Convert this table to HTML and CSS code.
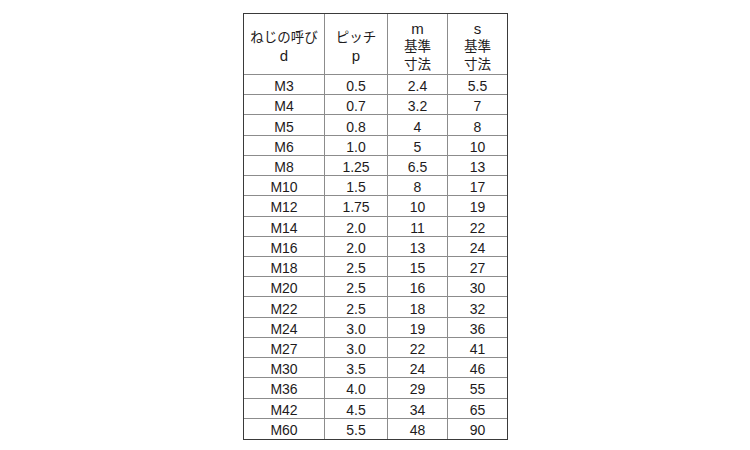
FILE: index.html
```html
<!DOCTYPE html>
<html lang="ja">
<head>
<meta charset="utf-8">
<link rel="stylesheet" href="styles.css">
</head>
<body>
<div class="page">
  <div class="table">
    <div class="cell head"><span>ねじの呼び</span><span class="sym">d</span></div>
    <div class="cell head"><span>ピッチ</span><span class="sym">p</span></div>
    <div class="cell head"><span class="sym">m</span><span>基準</span><span>寸法</span></div>
    <div class="cell head last"><span class="sym">s</span><span>基準</span><span>寸法</span></div>

    <div class="cell">M3</div><div class="cell">0.5</div><div class="cell">2.4</div><div class="cell last">5.5</div>
    <div class="cell">M4</div><div class="cell">0.7</div><div class="cell">3.2</div><div class="cell last">7</div>
    <div class="cell">M5</div><div class="cell">0.8</div><div class="cell">4</div><div class="cell last">8</div>
    <div class="cell">M6</div><div class="cell">1.0</div><div class="cell">5</div><div class="cell last">10</div>
    <div class="cell">M8</div><div class="cell">1.25</div><div class="cell">6.5</div><div class="cell last">13</div>
    <div class="cell">M10</div><div class="cell">1.5</div><div class="cell">8</div><div class="cell last">17</div>
    <div class="cell">M12</div><div class="cell">1.75</div><div class="cell">10</div><div class="cell last">19</div>
    <div class="cell">M14</div><div class="cell">2.0</div><div class="cell">11</div><div class="cell last">22</div>
    <div class="cell">M16</div><div class="cell">2.0</div><div class="cell">13</div><div class="cell last">24</div>
    <div class="cell">M18</div><div class="cell">2.5</div><div class="cell">15</div><div class="cell last">27</div>
    <div class="cell">M20</div><div class="cell">2.5</div><div class="cell">16</div><div class="cell last">30</div>
    <div class="cell">M22</div><div class="cell">2.5</div><div class="cell">18</div><div class="cell last">32</div>
    <div class="cell">M24</div><div class="cell">3.0</div><div class="cell">19</div><div class="cell last">36</div>
    <div class="cell">M27</div><div class="cell">3.0</div><div class="cell">22</div><div class="cell last">41</div>
    <div class="cell">M30</div><div class="cell">3.5</div><div class="cell">24</div><div class="cell last">46</div>
    <div class="cell">M36</div><div class="cell">4.0</div><div class="cell">29</div><div class="cell last">55</div>
    <div class="cell">M42</div><div class="cell">4.5</div><div class="cell">34</div><div class="cell last">65</div>
    <div class="cell bottom">M60</div><div class="cell bottom">5.5</div><div class="cell bottom">48</div><div class="cell bottom last">90</div>
  </div>
</div>
</body>
</html>
```

FILE: styles.css
```css
html, body {
  margin: 0;
  padding: 0;
  background: #ffffff;
}

.page {
  padding: 13px 0 0 243px;
  font-family: "Liberation Sans", "Noto Sans CJK JP", sans-serif;
  color: #1e1b1c;
}

.table {
  box-sizing: border-box;
  width: 265px;
  height: 427px;
  border: 1px solid #3a3a3a;
  display: grid;
  grid-template-columns: 81px 63px 60px 59px;
  grid-template-rows: 61px repeat(18, 1fr);
}

.cell {
  box-sizing: border-box;
  border-right: 1px solid #8c8c8c;
  border-bottom: 1px solid #8c8c8c;
  display: flex;
  align-items: center;
  justify-content: center;
  font-size: 14px;
  line-height: 1;
  padding-top: 3px;
}

.cell.last {
  border-right: none;
}

.cell.bottom {
  border-bottom: none;
}

.head {
  flex-direction: column;
  font-size: 13.5px;
  line-height: 18px;
  padding-top: 5px;
}

.head span {
  display: block;
  height: 18px;
}

.head .sym {
  font-size: 15px;
}
```
